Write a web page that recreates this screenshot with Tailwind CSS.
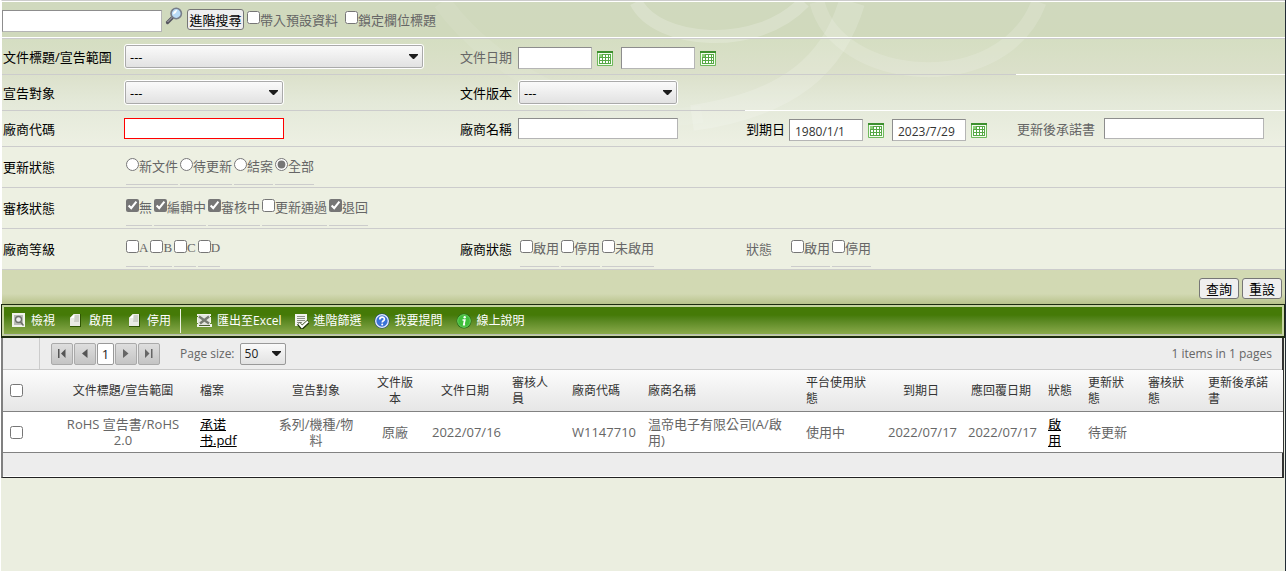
<!DOCTYPE html>
<html lang="zh-Hant">
<head>
<meta charset="utf-8">
<meta name="viewport" content="width=device-width, initial-scale=1">
<title>文件查詢</title>
<script src="https://cdn.jsdelivr.net/npm/@tailwindcss/browser@4"></script>
</head>
<body class="flex min-h-screen flex-col bg-white pl-px font-['Open_Sans','Noto_Sans_CJK_TC',sans-serif] text-[13px] leading-4 text-[#666]">
<svg class="hidden" aria-hidden="true">
  <symbol id="cal" viewBox="0 0 16 15">
    <rect width="16" height="15" rx="1" fill="#6fba5c"/><rect x="1" y="1" width="14" height="13" fill="#f4fbf0"/><rect width="16" height="2" fill="#3c8f2e"/>
    <rect x="2" y="3" width="12" height="10" fill="#56a845"/>
    <path d="M6 4h2v2H6zM9 4h2v2H9zM12 4h1v2h-1zM3 7h2v2H3zM6 7h2v2H6zM9 7h2v2H9zM12 7h1v2h-1zM3 10h2v2H3zM6 10h2v2H6zM9 10h2v2H9zM12 10h1v2h-1z" fill="#fff"/>
    <path d="M2 3h3v3H2z" fill="#8ccf78"/>
  </symbol>
  <symbol id="arrow" viewBox="0 0 9 5"><path d="M0 0h9v1L5 5H4L0 1z" fill="#1c1c1c"/></symbol>
  <symbol id="page" viewBox="0 0 12 13">
    <path d="M4 0h7v13H0V4z" fill="#2f5504"/><path d="M4 0h6v12H0V4z" fill="#e9ebe5"/><path d="M0 4l4-4v4z" fill="#fff"/><path d="M5 1h4v7H4z" fill="#cdd0c8"/>
  </symbol>
</svg>
<div class="flex grow flex-col border-r border-[#222b35] bg-[#ebeee0]">

  <form class="relative border-t border-[#ccc] border-l border-l-white bg-[#edf0e2]">
    <svg class="pointer-events-none absolute top-px left-0 h-36 w-full" viewBox="0 0 1283 144" preserveAspectRatio="none" aria-hidden="true">
      <defs><linearGradient id="wash" x1="0" y1="0" x2="0" y2="1">
        <stop offset="0" stop-color="#d0d9be"/><stop offset=".24" stop-color="#d0d9bc"/><stop offset=".26" stop-color="#d5dec2"/><stop offset=".49" stop-color="#dbe0ca"/><stop offset=".7" stop-color="#e4e9d9"/><stop offset="1" stop-color="#edf0e3"/>
      </linearGradient></defs>
      <rect width="1283" height="144" fill="url(#wash)"/>
      <g fill="none" stroke="#fff">
        <path d="M634 0C655 42 755 50 802 0" stroke-width="13" opacity=".2"/>
        <path d="M850 0C832 60 790 102 690 116" stroke-width="26" opacity=".16"/>
        <path d="M815 0C835 82 1000 98 1037 0" stroke-width="15" opacity=".15"/>
        <path d="M440 0C490 70 600 130 700 112" stroke-width="18" opacity=".07"/>
      </g>
    </svg>

    <div class="relative flex h-[37px] items-center border-y border-white text-[13px]">
      <input type="text" aria-label="搜尋" class="mt-0.5 h-[22px] w-40 border border-t-[#8d8d8d] border-l-[#8d8d8d] border-r-[#b5b5b5] border-b-[#b5b5b5] bg-white px-1">
      <button type="button" aria-label="搜尋" class="ml-[3px] mb-2 size-[18px]">
        <svg viewBox="0 0 18 18" class="size-[18px]"><path d="M2.500 15.500l5-5" stroke="#55555f" stroke-width="3.200" stroke-linecap="round"/><path d="M2.500 15l5-5" stroke="#b7b7bd"/><circle cx="11.200" cy="6.500" r="5.200" fill="#b9dbf7" stroke="#777d89" stroke-width="1.600"/><path d="M8 7.500c0-3 2-4.500 4.500-4.500-1 1-1 3.500-4.500 4.500z" fill="#fff"/></svg>
      </button>
      <button type="button" class="ml-1 h-[21px] w-[57px] rounded-[3px] border border-[#767676] bg-[#efefef] text-[13px] whitespace-nowrap text-black">進階搜尋</button>
      <label class="ml-[3px] flex items-center"><input type="checkbox" class="mb-1 size-[13px]">帶入預設資料</label>
      <label class="ml-[7px] flex items-center"><input type="checkbox" class="mb-1 size-[13px]">鎖定欄位標題</label>
    </div>

    <div class="relative flex h-[37px] items-stretch border-t border-t-[#ccc]">
      <div class="flex w-[1014px] items-center border-b border-[#ccc] pl-px">
        <label for="scope" class="w-[121px] text-black">文件標題/宣告範圍</label>
        <div class="relative w-[336px] pl-px">
          <select id="scope" class="block h-[23px] w-[298px] appearance-none rounded-[2px] border border-[#aaa] bg-linear-to-b from-[#fafafa] to-[#e2e2e2] px-1 text-[13px] text-black outline outline-white"><option>---</option></select>
          <svg class="pointer-events-none absolute top-[9px] left-[285px] h-[5px] w-[9px]"><use href="#arrow"/></svg>
        </div>
        <label for="docfrom" class="w-[58px]">文件日期</label>
        <input id="docfrom" type="text" class="mt-0.5 h-[22px] w-[74px] border border-t-[#8d8d8d] border-l-[#8d8d8d] border-r-[#b5b5b5] border-b-[#b5b5b5] bg-white px-[5px]">
        <button type="button" aria-label="選擇日期" class="mt-[3px] ml-[5px] h-[15px] w-4"><svg class="h-[15px] w-4"><use href="#cal"/></svg></button>
        <input aria-label="文件日期迄" type="text" class="mt-0.5 ml-2 h-[22px] w-[74px] border border-t-[#8d8d8d] border-l-[#8d8d8d] border-r-[#b5b5b5] border-b-[#b5b5b5] bg-white px-[5px]">
        <button type="button" aria-label="選擇日期" class="mt-[3px] ml-[5px] h-[15px] w-4"><svg class="h-[15px] w-4"><use href="#cal"/></svg></button>
      </div>
      <div class="grow border-b border-white"></div>
    </div>

    <div class="relative flex h-9 items-stretch">
      <div class="flex w-[743px] items-center border-b border-[#ccc] pl-px">
        <label for="target" class="w-[121px] text-black">宣告對象</label>
        <div class="relative w-[336px] pl-px">
          <select id="target" class="block h-[23px] w-[158px] appearance-none rounded-[2px] border border-[#aaa] bg-linear-to-b from-[#fafafa] to-[#e2e2e2] px-1 text-[13px] text-black outline outline-white"><option>---</option></select>
          <svg class="pointer-events-none absolute top-[9px] left-[145px] h-[5px] w-[9px]"><use href="#arrow"/></svg>
        </div>
        <label for="version" class="w-[58px] text-black">文件版本</label>
        <div class="relative pl-px">
          <select id="version" class="block h-[23px] w-[158px] appearance-none rounded-[2px] border border-[#aaa] bg-linear-to-b from-[#fafafa] to-[#e2e2e2] px-1 text-[13px] text-black outline outline-white"><option>---</option></select>
          <svg class="pointer-events-none absolute top-[9px] left-[145px] h-[5px] w-[9px]"><use href="#arrow"/></svg>
        </div>
      </div>
      <div class="grow border-b border-white"></div>
    </div>

    <div class="relative flex h-9 items-center border-b border-[#ccc] pl-px">
      <label for="vcode" class="w-[121px] text-black">廠商代碼</label>
      <div class="w-[336px]"><input id="vcode" type="text" class="block h-[21px] w-40 border border-[#f00] bg-white px-1"></div>
      <label for="vname" class="w-[58px] text-black">廠商名稱</label>
      <div class="w-[228px]"><input id="vname" type="text" class="block h-[21px] w-40 border border-t-[#8d8d8d] border-l-[#8d8d8d] border-r-[#b5b5b5] border-b-[#b5b5b5] bg-white px-1"></div>
      <label for="duefrom" class="w-[43px] text-black">到期日</label>
      <div class="flex w-[228px] items-center pt-[3px]">
        <input id="duefrom" type="text" value="1980/1/1" class="h-[22px] w-[74px] border border-t-[#8d8d8d] border-l-[#8d8d8d] border-r-[#b5b5b5] border-b-[#b5b5b5] bg-white px-[5px] pt-0.5 text-xs text-[#333]">
        <button type="button" aria-label="選擇日期" class="ml-[5px] h-[15px] w-4"><svg class="h-[15px] w-4"><use href="#cal"/></svg></button>
        <input aria-label="到期日迄" type="text" value="2023/7/29" class="ml-2 h-[22px] w-[74px] border border-t-[#8d8d8d] border-l-[#8d8d8d] border-r-[#b5b5b5] border-b-[#b5b5b5] bg-white px-[5px] pt-0.5 text-xs text-[#333]">
        <button type="button" aria-label="選擇日期" class="ml-[5px] h-[15px] w-4"><svg class="h-[15px] w-4"><use href="#cal"/></svg></button>
      </div>
      <label for="promise" class="w-[87px]">更新後承諾書</label>
      <input id="promise" type="text" class="h-[21px] w-40 border border-t-[#8d8d8d] border-l-[#8d8d8d] border-r-[#b5b5b5] border-b-[#b5b5b5] bg-white px-1">
    </div>

    <fieldset class="relative flex h-[41px] border-b border-[#ccc] pl-px" aria-label="更新狀態">
      <span class="w-[123px] self-center text-black">更新狀態</span>
      <div class="flex h-[38px] gap-0.5">
        <label class="flex items-center border-b border-[#ccc]"><input type="radio" name="upd" class="mb-[3px] size-[13px] accent-[#767676]">新文件</label>
        <label class="flex items-center border-b border-[#ccc]"><input type="radio" name="upd" class="mb-[3px] size-[13px] accent-[#767676]">待更新</label>
        <label class="flex items-center border-b border-[#ccc]"><input type="radio" name="upd" class="mb-[3px] size-[13px] accent-[#767676]">結案</label>
        <label class="flex items-center border-b border-[#ccc]"><input type="radio" name="upd" checked class="mb-[3px] size-[13px] accent-[#767676]">全部</label>
      </div>
    </fieldset>

    <fieldset class="relative flex h-[41px] border-b border-[#ccc] pl-px" aria-label="審核狀態">
      <span class="w-[123px] self-center text-black">審核狀態</span>
      <div class="flex h-[38px] gap-0.5">
        <label class="flex items-center border-b border-[#ccc]"><input type="checkbox" checked class="mb-[3px] size-[13px] accent-[#767676]">無</label>
        <label class="flex items-center border-b border-[#ccc]"><input type="checkbox" checked class="mb-[3px] size-[13px] accent-[#767676]">編輯中</label>
        <label class="flex items-center border-b border-[#ccc]"><input type="checkbox" checked class="mb-[3px] size-[13px] accent-[#767676]">審核中</label>
        <label class="flex items-center border-b border-[#ccc]"><input type="checkbox" class="mb-[3px] size-[13px]">更新通過</label>
        <label class="flex items-center border-b border-[#ccc]"><input type="checkbox" checked class="mb-[3px] size-[13px] accent-[#767676]">退回</label>
      </div>
    </fieldset>

    <fieldset class="relative flex h-[41px] border-b border-[#ccc] pl-px" aria-label="廠商等級與狀態">
      <span class="w-[123px] self-center text-black">廠商等級</span>
      <div class="flex h-[38px] w-[334px] gap-0.5 font-['Liberation_Serif',serif]">
        <label class="flex items-center border-b border-[#ccc]"><input type="checkbox" class="mb-[3px] size-[13px]">A</label>
        <label class="flex items-center border-b border-[#ccc]"><input type="checkbox" class="mb-[3px] size-[13px]">B</label>
        <label class="flex items-center border-b border-[#ccc]"><input type="checkbox" class="mb-[3px] size-[13px]">C</label>
        <label class="flex items-center border-b border-[#ccc]"><input type="checkbox" class="mb-[3px] size-[13px]">D</label>
      </div>
      <span class="w-[60px] self-center text-black">廠商狀態</span>
      <div class="flex h-[38px] w-[226px] gap-0.5">
        <label class="flex items-center border-b border-[#ccc]"><input type="checkbox" class="mb-[3px] size-[13px]">啟用</label>
        <label class="flex items-center border-b border-[#ccc]"><input type="checkbox" class="mb-[3px] size-[13px]">停用</label>
        <label class="flex items-center border-b border-[#ccc]"><input type="checkbox" class="mb-[3px] size-[13px]">未啟用</label>
      </div>
      <span class="w-[45px] self-center">狀態</span>
      <div class="flex h-[38px] gap-0.5">
        <label class="flex items-center border-b border-[#ccc]"><input type="checkbox" class="mb-[3px] size-[13px]">啟用</label>
        <label class="flex items-center border-b border-[#ccc]"><input type="checkbox" class="mb-[3px] size-[13px]">停用</label>
      </div>
    </fieldset>

    <div class="relative flex h-[34px] items-center justify-end gap-[3px] bg-linear-to-b from-[#d2d9b3] from-70% to-[#b9c38c] pr-[3px] pb-px pt-1">
      <button type="submit" class="h-[21px] w-10 rounded-[3px] border border-[#767676] bg-[#efefef] text-[13px] text-black">查詢</button>
      <button type="reset" class="h-[21px] w-10 rounded-[3px] border border-[#767676] bg-[#efefef] text-[13px] text-black">重設</button>
    </div>
  </form>

  <div class="border border-b-2 border-[#1c2a10] bg-[#c5d4a0] p-0.5 pb-px">
    <nav class="flex h-[27px] items-center bg-linear-to-b from-[#457a07] from-30% to-[#8aaa4a] pt-px pl-2 text-xs whitespace-nowrap text-white" aria-label="工具列">
      <button type="button" class="flex items-center gap-[6px]"><svg class="mb-0.5 h-[14px] w-[13px]" viewBox="0 0 13 14"><path d="M0 0h13v14H0z" fill="#f1f3ec"/><path d="M2 2h9v10H2z" fill="#babdb5"/><circle cx="6.500" cy="6.500" r="3" fill="#eee" stroke="#6c706a" stroke-width="1.300"/><path d="M8.500 9l3 3.500" stroke="#6b6e68" stroke-width="1.500"/></svg>檢視</button>
      <button type="button" class="ml-[15px] flex items-center gap-[7px]"><svg class="mb-0.5 h-[13px] w-3"><use href="#page"/></svg>啟用</button>
      <button type="button" class="ml-4 flex items-center gap-[6px]"><svg class="mb-0.5 h-[13px] w-3"><use href="#page"/></svg>停用</button>
      <span class="ml-[9px] h-6 w-px bg-[#eef2e4]"></span>
      <button type="button" class="ml-4 flex items-center gap-[5px]"><svg class="mb-0.5 h-[13px] w-[15px]" viewBox="0 0 15 13"><path d="M0 0h14v2H0zM0 10h15v3H0zM0 3h2v6H0zM12 3h2v6h-2z" fill="#f1f3ec"/><path d="M1 1h12v10H1z" fill="#e4e6df"/><path d="M2 2.500l10 7M12 2.500l-9 7" stroke="#787c72" stroke-width="2.300"/><path d="M2 11.500h11" stroke="#4b5e32"/></svg>匯出至Excel</button>
      <button type="button" class="ml-[13px] flex items-center gap-[5px]"><svg class="h-[15px] w-[14px]" viewBox="0 0 14 15"><path d="M0 0h12v12H0z" fill="#f2f3ee"/><path d="M2 2.500h8M2 4.500h8M2 6.500h8M2 8.500h5" stroke="#8d9186"/><path d="M3.500 9.500l3.500 4 6.500-6" fill="none" stroke="#1e3504" stroke-width="4"/><path d="M4 9.500l3 3.500 6-5.500" fill="none" stroke="#fff" stroke-width="2.200"/></svg>進階篩選</button>
      <button type="button" class="ml-3 flex items-center gap-[5px]"><svg class="size-4" viewBox="0 0 16 16"><circle cx="8" cy="8" r="7.500" fill="#173c84"/><circle cx="8" cy="8" r="6.300" fill="#3a73d8" stroke="#e7eefb" stroke-width="1.300"/><path d="M5.800 6.500c0-3 4.600-3 4.600-.3 0 1.600-2.200 1.500-2.200 3.300" fill="none" stroke="#fff" stroke-width="1.700"/><circle cx="8.200" cy="11.600" r="1" fill="#fff"/></svg>我要提問</button>
      <button type="button" class="ml-[13px] flex items-center gap-[5px]"><svg class="size-4" viewBox="0 0 16 16"><circle cx="8" cy="8" r="7.500" fill="#256c1c"/><circle cx="8" cy="8" r="6.300" fill="#3fbf3b" stroke="#6fd35f"/><circle cx="8.700" cy="4.300" r="1.200" fill="#fff"/><path d="M6.500 7h2.300l-1 4.600h1.300" fill="none" stroke="#fff" stroke-width="1.700"/></svg>線上說明</button>
    </nav>
    <div class="h-px bg-[#b8bdb0]"></div>
  </div>

  <section class="mr-px border-x-2 border-b border-l-[#808080] border-r-[#333] border-b-[#222] bg-[#ededed]">
    <div class="flex h-8 items-stretch border-b border-[#c9c9c9]">
      <div class="w-[37px] border-r border-[#ccc]"></div>
      <div class="ml-[11px] flex items-center gap-px">
        <button type="button" aria-label="第一頁" class="flex h-[22px] w-[22px] items-center justify-center rounded-[2px] border border-[#aaa] bg-linear-to-b from-[#dedede] to-[#c4c4c4]"><svg width="8" height="9" viewBox="0 0 8 9"><path d="M0 0h1.500v9H0zM7.500 0v9L3 4.500z" fill="#555"/></svg></button>
        <button type="button" aria-label="上一頁" class="flex h-[22px] w-[22px] items-center justify-center rounded-[2px] border border-[#aaa] bg-linear-to-b from-[#dedede] to-[#c4c4c4]"><svg width="6" height="9" viewBox="0 0 6 9"><path d="M5.500 0v9L0 4.500z" fill="#555"/></svg></button>
        <a href="#" class="flex h-[22px] w-[17px] items-center justify-center rounded-[2px] border border-[#999] bg-white text-[#222]">1</a>
        <button type="button" aria-label="下一頁" class="flex h-[22px] w-[22px] items-center justify-center rounded-[2px] border border-[#aaa] bg-linear-to-b from-[#dedede] to-[#c4c4c4]"><svg width="6" height="9" viewBox="0 0 6 9"><path d="M0 0v9l5.500-4.500z" fill="#666"/></svg></button>
        <button type="button" aria-label="最後頁" class="flex h-[22px] w-[22px] items-center justify-center rounded-[2px] border border-[#aaa] bg-linear-to-b from-[#dedede] to-[#c4c4c4]"><svg width="8" height="9" viewBox="0 0 8 9"><path d="M0 0v9l4.500-4.500zM6 0h1.500v9H6z" fill="#666"/></svg></button>
      </div>
      <label for="psize" class="ml-5 self-center text-xs">Page size:</label>
      <div class="relative ml-[5px] self-center">
        <select id="psize" class="block h-[22px] w-[46px] appearance-none rounded-[2px] border border-[#999] bg-linear-to-b from-[#fafafa] to-[#e2e2e2] px-1 text-xs text-[#222]"><option>50</option></select>
        <svg class="pointer-events-none absolute top-2 left-8 h-[5px] w-[9px]"><use href="#arrow"/></svg>
      </div>
      <div class="ml-auto self-center pr-[10px] text-xs">1 items in 1 pages</div>
    </div>
    <table class="w-full table-fixed border-separate border-spacing-0 bg-white text-left">
      <colgroup><col class="w-[50px]"><col class="w-[140px]"><col class="w-[74px]"><col class="w-[98px]"><col class="w-[60px]"><col class="w-[80px]"><col class="w-[60px]"><col class="w-[76px]"><col class="w-[158px]"><col class="w-[82px]"><col class="w-[80px]"><col class="w-[80px]"><col class="w-[40px]"><col class="w-[60px]"><col class="w-[60px]"><col class="w-[82px]"></colgroup>
      <thead>
        <tr class="h-[42px] text-xs leading-4 text-[#333] *:border-b *:border-[#828282] *:bg-linear-to-b *:from-[#fcfcfc] *:to-[#e6e6e6] *:px-[7px] *:font-normal">
          <th><input type="checkbox" aria-label="全選" class="block size-[13px]"></th>
          <th class="text-center">文件標題/宣告範圍</th><th>檔案</th><th class="text-center">宣告對象</th><th class="text-center">文件版本</th><th class="text-center">文件日期</th><th>審核人員</th><th>廠商代碼</th><th>廠商名稱</th><th>平台使用狀態</th><th class="text-center">到期日</th><th class="text-center">應回覆日期</th><th>狀態</th><th>更新狀態</th><th>審核狀態</th><th>更新後承諾書</th>
        </tr>
      </thead>
      <tbody>
        <tr class="h-[41px] *:border-b *:border-[#828282] *:pl-[7px]">
          <td><input type="checkbox" aria-label="選取" class="block size-[13px]"></td>
          <td class="pr-[7px] text-center">RoHS 宣告書/RoHS<br>2.0</td>
          <td><a href="#" class="text-black underline">承诺<br>书.pdf</a></td>
          <td class="pr-[7px] text-center">系列/機種/物<br>料</td>
          <td class="pr-[7px] text-center">原廠</td>
          <td class="pr-[7px] text-center">2022/07/16</td>
          <td></td>
          <td>W1147710</td>
          <td>温帝电子有限公司(A/啟<br>用)</td>
          <td>使用中</td>
          <td class="pr-[7px] text-center">2022/07/17</td>
          <td class="pr-[7px] text-center">2022/07/17</td>
          <td><a href="#" class="text-black underline">啟<br>用</a></td>
          <td>待更新</td>
          <td></td>
          <td></td>
        </tr>
      </tbody>
    </table>
    <div class="h-6 border-b border-white"></div>
  </section>
</div>
</body>
</html>
